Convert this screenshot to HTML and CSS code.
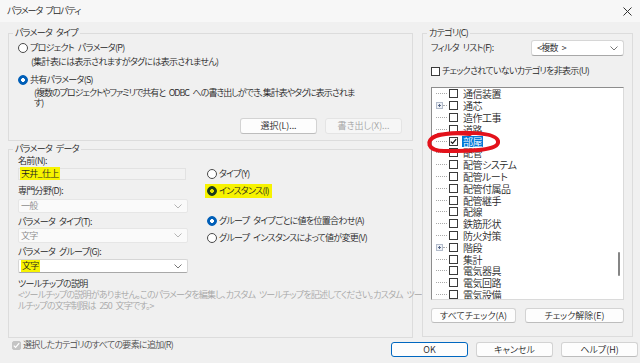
FILE: index.html
```html
<!DOCTYPE html>
<html lang="ja">
<head>
    <meta charset="UTF-8">
    <title>パラメータ プロパティ</title>
    <link rel="stylesheet" href="styles.css">
</head>
<body>
    <div class="titlebar">
        <span class="title">パラメータ プロパティ</span>
        <svg class="close" width="9" height="9" viewBox="0 0 9 9"><path d="M0.5 0.5 L8.5 8.5 M8.5 0.5 L0.5 8.5" stroke="#333" stroke-width="1"/></svg>
    </div>

    <div class="main">
        <div class="left">
            <fieldset class="group type-group">
                <legend>パラメータ タイプ</legend>
                <label class="radio"><span class="dot"></span>プロジェクト パラメータ(P)</label>
                <p class="note">(集計表には表示されますがタグには表示されません)</p>
                <label class="radio second"><span class="dot on"></span>共有パラメータ(S)</label>
                <p class="note wrap">(複数のプロジェクトやファミリで共有と ODBC への書き出しができ、集計表やタグに表示されま<br>す)</p>
                <div class="btn-row">
                    <button class="btn">選択(L)...</button>
                    <button class="btn" disabled>書き出し(X)...</button>
                </div>
            </fieldset>

            <fieldset class="group data-group">
                <legend>パラメータ データ</legend>
                <div class="data-cols">
                    <div class="fields">
                        <div class="label first">名前(N):</div>
                        <div class="textbox"><span class="hl">天井_仕上</span></div>
                        <div class="label">専門分野(D):</div>
                        <div class="combo disabled">一般<svg class="chev" width="8" height="5" viewBox="0 0 8 5"><path d="M0.5 0.5 L4 4 L7.5 0.5" fill="none" stroke="#b5b5b5"/></svg></div>
                        <div class="label">パラメータ タイプ(T):</div>
                        <div class="combo disabled tall">文字<svg class="chev" width="8" height="5" viewBox="0 0 8 5"><path d="M0.5 0.5 L4 4 L7.5 0.5" fill="none" stroke="#b5b5b5"/></svg></div>
                        <div class="label">パラメータ グループ(G):</div>
                        <div class="combo"><span class="hl">文字</span><svg class="chev" width="8" height="5" viewBox="0 0 8 5"><path d="M0.5 0.5 L4 4 L7.5 0.5" fill="none" stroke="#777"/></svg></div>
                    </div>
                    <div class="options">
                        <label class="radio"><span class="dot"></span>タイプ(Y)</label>
                        <label class="radio marked"><span class="dot on"></span>インスタンス(I)</label>
                        <label class="radio spaced"><span class="dot on"></span>グループ タイプごとに値を位置合わせ(A)</label>
                        <label class="radio next"><span class="dot"></span>グループ インスタンスによって値が変更(V)</label>
                    </div>
                </div>
                <div class="label tip-label">ツールチップの説明</div>
                <p class="tooltip">&lt;ツールチップの説明がありません。このパラメータを編集し、カスタム ツールチップを記述してください。カスタム ツー<br>ルチップの文字制限は 250 文字です。&gt;</p>
            </fieldset>
        </div>

        <fieldset class="group cat-group">
            <legend>カテゴリ(C)</legend>
            <div class="filter-row">
                <span>フィルタ リスト(F):</span>
                <div class="combo filter">&lt;複数 &gt;<svg class="chev" width="8" height="5" viewBox="0 0 8 5"><path d="M0.5 0.5 L4 4 L7.5 0.5" fill="none" stroke="#777"/></svg></div>
            </div>
            <label class="check-row"><span class="cb"></span>チェックされていないカテゴリを非表示(U)</label>

            <div class="tree-wrap">
                <div class="tree">
                    <div class="tree-list">
                        <div class="tree-row"><span class="branch"></span><span class="cb"></span>通信装置</div>
                        <div class="tree-row"><span class="exp"></span><span class="branch short"></span><span class="cb"></span>通芯</div>
                        <div class="tree-row"><span class="branch"></span><span class="cb"></span>造作工事</div>
                        <div class="tree-row"><span class="branch"></span><span class="cb"></span>道路</div>
                        <div class="tree-row"><span class="branch"></span><span class="cb checked"><svg width="7" height="7" viewBox="0 0 7 7"><path d="M0.8 3.6 L2.6 5.4 L6.2 1.2" fill="none" stroke="#111" stroke-width="1.2"/></svg></span><span class="selected">部屋</span></div>
                        <div class="tree-row"><span class="branch"></span><span class="cb"></span>配管</div>
                        <div class="tree-row"><span class="branch"></span><span class="cb"></span>配管システム</div>
                        <div class="tree-row"><span class="branch"></span><span class="cb"></span>配管ルート</div>
                        <div class="tree-row"><span class="branch"></span><span class="cb"></span>配管付属品</div>
                        <div class="tree-row"><span class="branch"></span><span class="cb"></span>配管継手</div>
                        <div class="tree-row"><span class="branch"></span><span class="cb"></span>配線</div>
                        <div class="tree-row"><span class="branch"></span><span class="cb"></span>鉄筋形状</div>
                        <div class="tree-row"><span class="branch"></span><span class="cb"></span>防火対策</div>
                        <div class="tree-row"><span class="exp"></span><span class="branch short"></span><span class="cb"></span>階段</div>
                        <div class="tree-row"><span class="branch"></span><span class="cb"></span>集計</div>
                        <div class="tree-row"><span class="branch"></span><span class="cb"></span>電気器具</div>
                        <div class="tree-row"><span class="branch"></span><span class="cb"></span>電気回路</div>
                        <div class="tree-row"><span class="branch"></span><span class="cb"></span>電気設備</div>
                    </div>
                    <div class="scroll"><div class="thumb"></div></div>
                </div>
                <!-- red marker drawn over the screenshot -->
                <svg class="marker" width="80" height="26" viewBox="0 0 80 26">
                    <path d="M12 5 C36 1, 70 2, 72 11 C74 21, 44 21, 18 21 C1 21, -1 10, 10 6 C20 3, 34 3, 44 4" fill="none" stroke="#e3121b" stroke-width="4" stroke-linecap="round"/>
                </svg>
            </div>

            <div class="btn-row cat-buttons">
                <button class="btn wide-a">すべてチェック(A)</button>
                <button class="btn wide-b">チェック解除(E)</button>
            </div>
        </fieldset>
    </div>

    <div class="footer">
        <label class="check-row disabled"><span class="cb grey"><svg width="7" height="7" viewBox="0 0 7 7"><path d="M0.8 3.6 L2.6 5.4 L6.2 1.2" fill="none" stroke="#fff" stroke-width="1.2"/></svg></span>選択したカテゴリのすべての要素に追加(R)</label>
        <div class="footer-buttons">
            <button class="btn default">OK</button>
            <button class="btn">キャンセル</button>
            <button class="btn">ヘルプ(H)</button>
        </div>
    </div>
</body>
</html>
```

FILE: styles.css
```css
* {
    box-sizing: border-box;
}
body {
    margin: 0;
    width: 640px;
    height: 363px;
    overflow: hidden;
    background: #f0f0f0;
    color: #1f1f1f;
    font-family: "Noto Sans CJK JP", "Noto Sans", sans-serif;
    font-size: 9px;
    font-weight: 350;
    line-height: 12px;
    font-feature-settings: "palt";
    letter-spacing: -0.7px;
    word-spacing: 2.5px;
}
p {
    margin: 0;
}

.titlebar {
    height: 22px;
    background: #f7f7f7;
    display: flex;
    align-items: center;
    justify-content: space-between;
    padding: 0 8px 0 7px;
}
.title {
    letter-spacing: -1.1px;
}

.main {
    display: flex;
    gap: 9px;
    height: 316px;
    padding: 5px 7px 0 8px;
}
.left {
    width: 405px;
    display: flex;
    flex-direction: column;
    gap: 2px;
}

fieldset.group {
    margin: 0;
    min-width: 0;
    border: 1px solid #dcdcdc;
}
legend {
    padding: 0 2px;
    margin-left: -5px;
    line-height: 12px;
}

/* parameter type */
.type-group {
    padding: 3px 10px 6px 9px;
}
.radio {
    display: flex;
    align-items: center;
    gap: 2px;
    height: 12px;
    white-space: nowrap;
}
.dot {
    width: 10px;
    height: 10px;
    border-radius: 50%;
    border: 1px solid #4a4a4a;
    background: #fff;
    flex: none;
}
.dot.on {
    border-color: #005fb8;
    background: radial-gradient(circle, #fff 0 1.6px, #005fb8 2.2px);
}
.note {
    margin: 2px 0 0 13px;
    white-space: nowrap;
}
.note.wrap {
    margin-left: 16px;
    line-height: 9.5px;
    letter-spacing: -1px;
}
.radio.second {
    margin-top: 6px;
}
.btn-row {
    display: flex;
    justify-content: flex-end;
    gap: 8px;
    margin-top: 11px;
}

.btn {
    width: 77px;
    height: 16px;
    padding: 0;
    font: inherit;
    color: #1f1f1f;
    line-height: 14px;
    background: #fdfdfd;
    border: 1px solid #d3d3d3;
    border-bottom-color: #bdbdbd;
    border-radius: 3px;
}
.btn:disabled {
    color: #a3a3a3;
    background: #f6f6f6;
    border-color: #e4e4e4;
}
.btn.default {
    border: 1px solid #0067c0;
}

/* parameter data */
.data-group {
    flex: 1;
    padding: 0 4px 0 9px;
}
.data-cols {
    display: flex;
    gap: 19px;
}
.fields {
    width: 170px;
}
.label {
    margin-top: 3px;
    white-space: nowrap;
}
.label.first {
    margin-top: 0;
}
.label.tip-label {
    margin-top: 5px;
}
.textbox {
    width: 168px;
    height: 12px;
    margin: 1px 0 5px;
    background: #f2f2f2;
    border: 1px solid #e2e2e2;
    padding-left: 1px;
    line-height: 10px;
}
.hl {
    background: #f7f300;
    padding: 0 1px;
}
.combo {
    height: 14px;
    margin-top: 1px;
    display: flex;
    align-items: center;
    justify-content: space-between;
    padding: 0 5px 0 2px;
    background: #fff;
    border: 1px solid #d6d6d6;
    border-bottom-color: #a8a8a8;
    border-radius: 2px;
}
.combo.disabled {
    margin-top: 2px;
    color: #8a8a8a;
    background: #fafafa;
    border-color: #e6e6e6;
}
.combo.tall {
    height: 15px;
    margin-top: 0;
}
.options {
    padding-top: 13px;
}
.radio.marked {
    margin: 4px 0 0 -2px;
    padding: 0 1px 0 2px;
    height: 14px;
    width: 67px;
    background: #f7f300;
}
.radio.marked .dot {
    border-color: #1c3b1c;
    background: radial-gradient(circle, #e5e200 0 1.6px, #1c3b1c 2.2px);
}
.radio.spaced {
    margin-top: 17px;
}
.radio.next {
    margin-top: 5px;
}
.tooltip {
    color: #a6a6a6;
    line-height: 10.5px;
    letter-spacing: -0.8px;
    white-space: nowrap;
}

/* category */
.cat-group {
    height: 310px;
    width: 211px;
    padding: 1px 8px 0 8px;
}
.cat-group legend {
    margin-left: -4px;
}
.filter-row {
    display: flex;
    align-items: center;
    justify-content: space-between;
    height: 16px;
}
.combo.filter {
    width: 93px;
    height: 16px;
    margin: 0;
    padding-left: 5px;
    border-radius: 3px;
}
.check-row {
    display: flex;
    align-items: center;
    height: 12px;
    margin-top: 9px;
    white-space: nowrap;
}
.cb {
    width: 9px;
    height: 9px;
    flex: none;
    border: 1px solid #3a3a3a;
    background: #fff;
    margin-right: 2px;
    display: flex;
    align-items: center;
    justify-content: center;
}
.tree-wrap {
    position: relative;
    margin-top: 10px;
}
.tree {
    height: 213px;
    display: flex;
    overflow: hidden;
    background: #fff;
    border: 1px solid;
    border-color: #8d8d8d #dadada #dadada #8d8d8d;
}
.tree-list {
    flex: 1;
    padding-left: 4px;
}
.tree-row {
    height: 11.8px;
    display: flex;
    align-items: center;
    white-space: nowrap;
    font-size: 10px;
    line-height: 11px;
    letter-spacing: -0.5px;
}
.branch {
    width: 11px;
    height: 0;
    border-top: 1px dotted #a9a9a9;
    margin-right: 2px;
}
.branch.short {
    width: 4px;
}
.exp {
    width: 7px;
    height: 7px;
    flex: none;
    border: 1px solid #b3bccb;
    background: linear-gradient(#5a6a8a, #5a6a8a) center / 3px 1px no-repeat,
                linear-gradient(#5a6a8a, #5a6a8a) center / 1px 3px no-repeat,
                #eef1f6;
}
.tree-row .cb {
    margin-right: 5px;
}
.selected {
    background: #0078d7;
    color: #fff;
    padding: 0 1px;
    margin-left: -1px;
}
.scroll {
    width: 9px;
    padding: 164px 0 0 4px;
}
.thumb {
    width: 2px;
    height: 24px;
    background: #858585;
    border-radius: 1px;
}
.marker {
    position: absolute;
    left: -5px;
    top: 43px;
    overflow: visible;
}
.cat-buttons {
    margin-top: 8px;
    justify-content: space-between;
    gap: 0;
}
.wide-a {
    width: 85px;
    height: 15px;
}
.wide-b {
    width: 99px;
    height: 15px;
}

/* footer */
.footer {
    display: flex;
    align-items: flex-start;
    justify-content: space-between;
    padding: 1px 2px 0 12px;
}
.footer .check-row {
    margin-top: 0;
    color: #4a4a4a;
}
.cb.grey {
    background: #c4c4c4;
    border-color: #c4c4c4;
    border-radius: 2px;
}
.footer-buttons {
    display: flex;
    gap: 8px;
    margin-top: 3px;
}
.footer-buttons .btn {
    height: 15px;
}
```
